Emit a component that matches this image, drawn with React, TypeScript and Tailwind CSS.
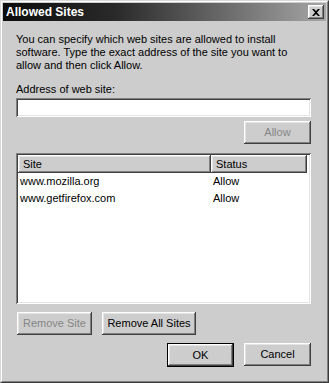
import React from "react";

const raised =
  "shadow-[inset_-1px_-1px_#404040,inset_1px_1px_#ffffff,inset_-2px_-2px_#808080,inset_2px_2px_#e4e4e4]";
const sunken =
  "shadow-[inset_1px_1px_#808080,inset_-1px_-1px_#ffffff,inset_2px_2px_#404040,inset_-2px_-2px_#e4e4e4]";

function Btn({
  children,
  w,
  disabled,
  def,
}: {
  children: React.ReactNode;
  w: string;
  disabled?: boolean;
  def?: boolean;
}) {
  if (def) {
    return (
      <div className={`${w} h-[24px] border border-black bg-[#cdcdcd]`}>
        <div
          className={`h-full w-full flex items-center justify-center text-black ${raised}`}
        >
          {children}
        </div>
      </div>
    );
  }
  return (
    <div
      className={`${w} h-[23px] flex items-center justify-center bg-[#cdcdcd] ${raised} ${
        disabled ? "text-[#868686]" : "text-black"
      }`}
    >
      {children}
    </div>
  );
}

export default function App() {
  return (
    <div
      className="w-[329px] h-[383px] bg-[#cdcdcd] text-[11px] leading-[13px] text-black"
      style={{ fontFamily: '"Liberation Sans", Arial, sans-serif' }}
    >
      <div className="w-full h-full border border-[#d8d8d8] border-r-[#3a3a3a] border-b-[#3a3a3a]">
        <div className="w-full h-full border border-white border-r-[#808080] border-b-[#808080] p-[1px] flex flex-col">
          {/* title bar */}
          <div className="h-[18px] flex items-center justify-between bg-[linear-gradient(to_right,#0c0c0c,#2a2a2a_35%,#a6a6a6)] pl-[3px] pr-[2px]">
            <span className="text-white font-bold text-[12px] leading-[18px]">Allowed Sites</span>
            <div
              className={`w-[16px] h-[14px] bg-[#cdcdcd] flex items-center justify-center ${raised}`}
            >
              <svg width="8" height="7" viewBox="0 0 8 7">
                <path d="M0 0h2l2 2 2-2h2L5 3.5 8 7H6L4 5 2 7H0l3-3.5z" fill="#000" />
              </svg>
            </div>
          </div>

          {/* content */}
          <div className="flex flex-col pl-[13px] pr-[15px]">
            <p className="mt-[12px] w-[290px]">
              You can specify which web sites are allowed to install software. Type
              the exact address of the site you want to allow and then click Allow.
            </p>
            <div className="mt-[11px]">Address of web site:</div>
            <div className={`mt-[2px] h-[19px] bg-white ${sunken}`} />
            <div className="mt-[4px] flex justify-end">
              <Btn w="w-[67px]" disabled>
                Allow
              </Btn>
            </div>
            <div className={`mt-[9px] h-[151px] bg-white p-[2px] ${sunken}`}>
              <div className="flex h-[18px]">
                <div className={`w-[193px] h-full flex items-center pl-[5px] bg-[#cdcdcd] ${raised}`}>
                  Site
                </div>
                <div className={`w-[96px] h-full flex items-center pl-[5px] bg-[#cdcdcd] ${raised}`}>
                  Status
                </div>
              </div>
              <div className="flex flex-col">
                <div className="flex h-[17px] items-center">
                  <div className="w-[193px] pl-[2px]">www.mozilla.org</div>
                  <div className="pl-[2px]">Allow</div>
                </div>
                <div className="flex h-[17px] items-center">
                  <div className="w-[193px] pl-[2px]">www.getfirefox.com</div>
                  <div className="pl-[2px]">Allow</div>
                </div>
              </div>
            </div>
            <div className="mt-[8px] flex gap-[10px] pl-[1px]">
              <Btn w="w-[75px]" disabled>
                Remove Site
              </Btn>
              <Btn w="w-[94px]">Remove All Sites</Btn>
            </div>
            <div className="mt-[8px] flex justify-end gap-[10px]">
              <Btn w="w-[67px]" def>
                OK
              </Btn>
              <Btn w="w-[67px]">Cancel</Btn>
            </div>
          </div>
        </div>
      </div>
    </div>
  );
}
